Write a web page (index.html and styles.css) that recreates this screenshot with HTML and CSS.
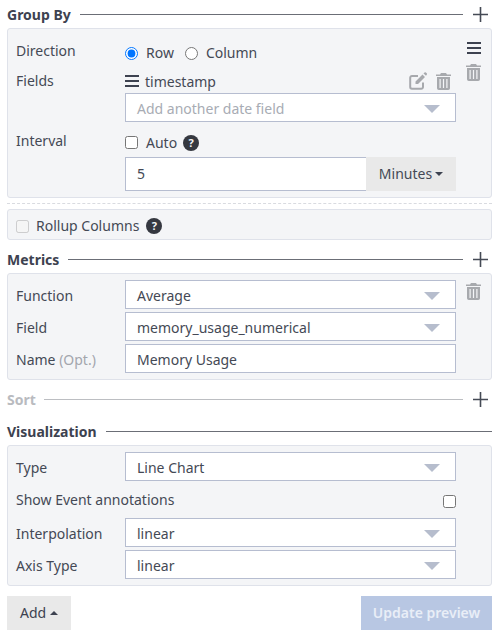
FILE: index.html
```html
<!DOCTYPE html>
<html lang="en">
<head>
<meta charset="utf-8">
<title>Group By</title>
<link rel="stylesheet" href="styles.css">
</head>
<body>
<svg class="defs" width="0" height="0" aria-hidden="true">
  <symbol id="trash" viewBox="0 0 15 17">
    <path d="M5 0H10L11 1.500H15V3H0V1.500H4z" fill="currentColor"/>
    <path fill-rule="evenodd" d="M1 4H14V15.200A1.800 1.800 0 0 1 12.200 17H2.800A1.800 1.800 0 0 1 1 15.200z M3.500 6V15H4.700V6z M6.900 6V15H8.100V6z M10.300 6V15H11.500V6z" fill="currentColor"/>
  </symbol>
  <symbol id="bars" viewBox="0 0 14 12">
    <path d="M0 0H14V2H0zM0 5H14V7H0zM0 10H14V12H0z" fill="currentColor"/>
  </symbol>
  <symbol id="plus" viewBox="0 0 15 15">
    <path d="M6.700 0H8.300V6.700H15V8.300H8.300V15H6.700V8.300H0V6.700H6.700z" fill="currentColor"/>
  </symbol>
</svg>
<main class="builder">
  <header class="head">
    <h2 class="title">Group By</h2><span class="rule"></span>
    <svg class="plus"><use href="#plus"/></svg>
  </header>
  <section class="panel panel-group">
    <div class="body">
      <div class="row row-direction">
        <span class="label">Direction</span>
        <div class="control radios">
          <label class="choice"><input type="radio" name="dir" checked>Row</label>
          <label class="choice"><input type="radio" name="dir">Column</label>
        </div>
      </div>
      <div class="row row-fields">
        <span class="label">Fields</span>
        <div class="control">
          <div class="field-line">
            <svg class="bars-small"><use href="#bars"/></svg>
            <span class="field-name">timestamp</span>
            <svg class="edit" viewBox="0 0 18 18">
              <path d="M14 10.500V15a1.800 1.800 0 0 1-1.800 1.800H3a1.800 1.800 0 0 1-1.800-1.800V5.800A1.800 1.800 0 0 1 3 4H9" fill="none" stroke="currentColor" stroke-width="2"/>
              <path d="M6.500 9.500L13.500 2.500L16 5L9 12H6.500zM14.500 1.500L15.500 .5a1 1 0 0 1 1.400 0L17.700 1.300a1 1 0 0 1 0 1.400L17 3.800z" fill="currentColor"/>
            </svg>
            <svg class="trash trash-field"><use href="#trash"/></svg>
          </div>
          <div class="select placeholder">Add another date field<i class="caret"></i></div>
        </div>
      </div>
      <div class="row row-interval">
        <span class="label">Interval</span>
        <div class="control">
          <div class="auto-line">
            <label class="choice"><input type="checkbox">Auto</label>
            <span class="help">?</span>
          </div>
          <div class="input-group">
            <div class="input grow">5</div>
            <div class="addon">Minutes<i class="mini-caret"></i></div>
          </div>
        </div>
      </div>
    </div>
    <div class="side">
      <svg class="bars-large"><use href="#bars"/></svg>
      <svg class="trash"><use href="#trash"/></svg>
    </div>
  </section>
  <div class="dashed"></div>
  <section class="panel panel-rollup">
    <label class="choice rollup"><input type="checkbox" disabled>Rollup Columns</label>
    <span class="help">?</span>
  </section>

  <header class="head head-metrics">
    <h2 class="title">Metrics</h2><span class="rule"></span>
    <svg class="plus"><use href="#plus"/></svg>
  </header>
  <section class="panel panel-form">
    <div class="body">
      <div class="row form-row"><span class="label">Function</span><div class="select">Average<i class="caret"></i></div></div>
      <div class="row form-row"><span class="label">Field</span><div class="select">memory_usage_numerical<i class="caret"></i></div></div>
      <div class="row form-row"><span class="label">Name <span class="opt">(Opt.)</span></span><div class="input">Memory Usage</div></div>
    </div>
    <div class="side side-metrics"><svg class="trash"><use href="#trash"/></svg></div>
  </section>

  <header class="head head-sort">
    <h2 class="title">Sort</h2><span class="rule"></span>
    <svg class="plus"><use href="#plus"/></svg>
  </header>

  <header class="head head-viz">
    <h2 class="title">Visualization</h2><span class="rule rule-long"></span>
  </header>
  <section class="panel panel-form">
    <div class="body">
      <div class="row form-row"><span class="label">Type</span><div class="select">Line Chart<i class="caret"></i></div></div>
      <div class="row annotations"><span class="label">Show Event annotations</span><input type="checkbox"></div>
      <div class="row form-row"><span class="label">Interpolation</span><div class="select">linear<i class="caret"></i></div></div>
      <div class="row form-row"><span class="label">Axis Type</span><div class="select">linear<i class="caret"></i></div></div>
    </div>
    <div class="side"></div>
  </section>

  <footer class="actions">
    <button class="btn" type="button">Add<i class="mini-caret up"></i></button>
    <button class="btn primary" type="button">Update preview</button>
  </footer>
</main>
</body>
</html>
```
FILE: styles.css
```css
* { box-sizing: border-box; }
html, body { margin: 0; padding: 0; background: #fff; }
body {
  font-family: "Noto Sans", "Liberation Sans", sans-serif;
  font-size: 14px;
  color: #444955;
  width: 500px;
  height: 643px;
  overflow: hidden;
}
.defs { position: absolute; }
.builder { padding: 7px 8px 0 7px; }

.head { display: flex; align-items: center; height: 15px; }
.title { margin: 0; font-size: 14px; font-weight: 700; line-height: 15px; color: #3d4250; }
.rule { flex: 1; height: 1px; background: #6b6e76; margin: 0 10px 0 9px; }
.rule-long { margin-right: 0; }
.plus { width: 15px; height: 15px; color: #454a55; flex: none; margin-right: 4px; }
.head-metrics { margin-top: 12px; }
.head-sort { margin-top: 12px; }
.head-sort .title { color: #b9bbbf; }
.head-sort .rule { background: #bcbec2; margin-left: 8px; }
.head-viz { margin-top: 17px; }

.panel {
  display: flex;
  background: #f4f5f7;
  border: 1px solid #dfe2ea;
  border-radius: 3px;
  margin-top: 6px;
}
.panel-group { height: 170px; padding: 8px 0 0 8px; }
.panel-form { padding: 6px 0 6px 8px; }
.panel-rollup { height: 31px; margin-top: 0; align-items: center; padding: 3px 0 0 8px; }
.body { width: 440px; flex: none; }
.side { flex: 1; display: flex; flex-direction: column; align-items: center; padding-top: 5px; }
.side-metrics { padding-top: 3px; }

.row { display: flex; }
.label { width: 109px; flex: none; line-height: 20px; }
.opt { color: #a3a6ad; }
.control { flex: 1; min-width: 0; }
.form-row { height: 29px; margin-bottom: 3px; align-items: center; }
.form-row:last-child { margin-bottom: 0; }
.form-row .label { padding-top: 2px; height: 22px; }

.row-direction { height: 32px; }
.row-direction .label { margin-top: 4px; }
.radios { display: flex; gap: 11px; padding-top: 6px; align-items: flex-start; }
.choice { display: inline-flex; align-items: center; line-height: 20px; }
.choice input { margin: 0 8px 0 0; width: 13px; height: 13px; }
.rollup input { margin-right: 7px; }
.row-fields { height: 59px; }
.row-fields .label { margin-top: 2px; }
.field-line { display: flex; align-items: center; height: 24px; }
.field-name { margin-left: 6px; flex: 1; }
.row-interval .label { margin-top: 3px; }
.auto-line { display: flex; align-items: center; height: 29px; gap: 6px; }

.select, .input {
  position: relative;
  flex: 1;
  height: 29px;
  line-height: 29px;
  padding-left: 11px;
  background: #fff;
  border: 1px solid #b6bdd0;
}
.placeholder { color: #a8acb4; }
.caret {
  position: absolute;
  right: 15px;
  top: 11px;
  width: 0;
  height: 0;
  border-left: 8px solid transparent;
  border-right: 8px solid transparent;
  border-top: 8px solid #b6bdcd;
}
.input-group { display: flex; height: 34px; }
.input-group .input { height: 34px; line-height: 32px; border-right: 0; }
.grow { flex: 1; }
.addon {
  width: 90px;
  padding-bottom: 2px;
  background: #e9e9e9;
  display: flex;
  align-items: center;
  justify-content: center;
}
.mini-caret {
  display: inline-block;
  margin-left: 3px;
  margin-top: 2px;
  width: 0;
  height: 0;
  border-left: 4px solid transparent;
  border-right: 4px solid transparent;
  border-top: 4px solid #3d4250;
}
.mini-caret.up { border-top: 0; border-bottom: 4px solid #3d4250; margin: 0 0 2px 4px; vertical-align: middle; }

.help {
  width: 16px;
  height: 16px;
  border-radius: 50%;
  background: #353840;
  color: #f4f5f7;
  font-size: 11px;
  font-weight: 700;
  line-height: 16px;
  text-align: center;
  flex: none;
}
.panel-rollup .help { margin-left: 7px; }

.bars-small { width: 14px; height: 12px; color: #3d4250; flex: none; }
.bars-large { width: 14px; height: 12px; color: #3d4250; }
.trash { width: 15px; height: 17px; color: #a7a9ad; margin-top: 10px; }
.side-metrics .trash { margin-top: 0; }
.trash-field { margin: 0 5px 0 9px; }
.edit { width: 18px; height: 18px; color: #a7a9ad; flex: none; }

.dashed { border-top: 1px dashed #d9dbe0; height: 0; margin: 5px 0; }

.annotations { height: 34px; align-items: flex-start; justify-content: space-between; padding-top: 6px; }
.annotations .label { width: auto; }
.annotations input { margin: 5px 0 0; width: 13px; height: 13px; }

.actions { display: flex; justify-content: space-between; margin-top: 10px; }
.btn {
  height: 34px;
  border: 0;
  font: inherit;
  color: #3d4250;
  background: #e9e9e9;
  padding: 0 13px 2px;
}
.primary {
  background: #b8c7e3;
  color: #e9eef7;
  font-weight: 600;
  width: 131px;
  padding: 0 0 2px;
}
```
